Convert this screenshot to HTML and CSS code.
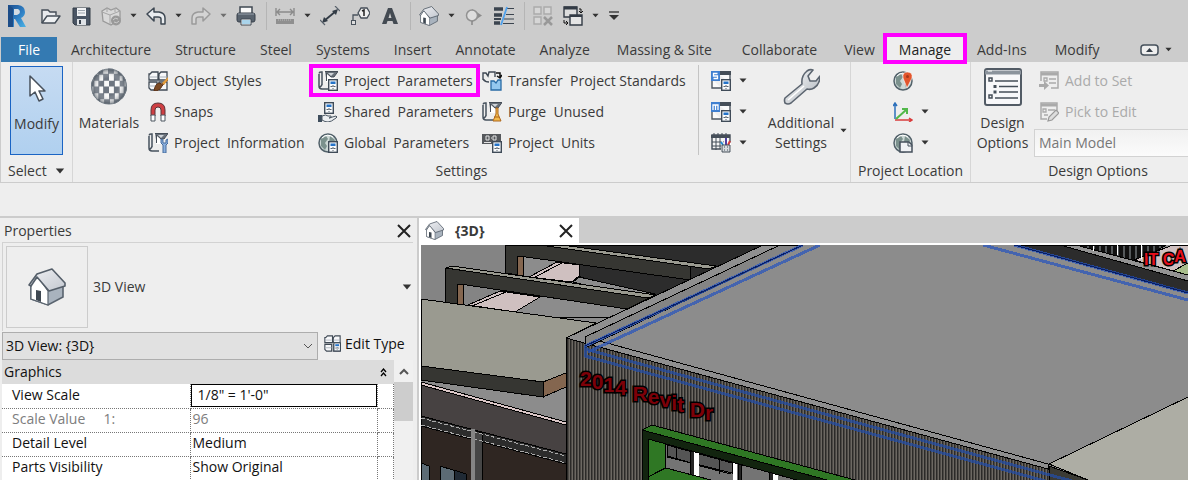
FILE: index.html
```html
<!DOCTYPE html>
<html lang="en">
<head>
<meta charset="utf-8">
<title>Revit - Manage</title>
<link rel="stylesheet" href="styles.css">
</head>
<body>
<svg class="defs" aria-hidden="true">
  <defs>
    <linearGradient id="metal" x1="0" y1="0" x2="1" y2="1"><stop offset="0" stop-color="#fff"/><stop offset="1" stop-color="#aab1b9"/></linearGradient>
    <linearGradient id="logo" x1="0" y1="0" x2="1" y2="1"><stop offset="0" stop-color="#1d4f8f"/><stop offset=".55" stop-color="#2f7fc4"/><stop offset="1" stop-color="#4bb4e6"/></linearGradient>
    <linearGradient id="roof" x1="0" y1="0" x2="1" y2="1"><stop offset="0" stop-color="#f0f1f4"/><stop offset="1" stop-color="#c3c8d0"/></linearGradient>
    <radialGradient id="ballShade"><stop offset=".5" stop-color="#fff" stop-opacity="0"/><stop offset="1" stop-color="#3c4650" stop-opacity=".6"/></radialGradient>
    <clipPath id="ballClip"><circle cx="19" cy="19" r="18.500"/></clipPath>
  </defs>
  <symbol id="caret" viewBox="0 0 8 5"><path d="M0.500 0.500h7L4 4.500z" fill="#333"/></symbol>
  <symbol id="house" viewBox="0 0 38 38">
    <path d="M3 15v16l17 6 15-8V16L21 22z" fill="#a9b3be" stroke="#59636e" stroke-width="1.600"/>
    <path d="M3 15l7-6 10 14v14L3 31z" fill="#fff" stroke="#59636e" stroke-width="1.200"/>
    <path d="M8 22l5 1v11l-5-2z" fill="#3f4852"/>
    <path d="M1 17L9 6l15-5 13 14v3L21 23 9 9 3 18z" fill="url(#roof)" stroke="#545e69" stroke-width="1.600" stroke-linejoin="round"/>
  </symbol>
  <symbol id="sheet" viewBox="0 0 20 20">
    <path d="M1.500 2.500Q1 1 3 1h1v13M1 3v12q0 3 3 3h7M4 13q0 2-2 3" fill="none" stroke="#46515d" stroke-width="1.500"/>
    <path d="M6 1h14l-4 6v4H8V6z" fill="#fff"/><path d="M7 .5h13l-4 5.500h-3L8.500 2v8" fill="#687079" stroke="#454d57"/><path d="M10 2h6l-3 3z" fill="#cfd4d9"/>
  </symbol>
  <symbol id="calc" viewBox="0 0 10 12">
    <rect x=".7" y=".7" width="8.600" height="10.600" fill="#f8fafc" stroke="#3f4b58" stroke-width="1.400"/>
    <rect x="2.500" y="2.500" width="5" height="2.500" fill="#2473c8"/><path d="M2.500 7.500h5M5 6v4" stroke="#59636d" stroke-dasharray="2 1"/>
  </symbol>
  <symbol id="globe" viewBox="0 0 20 20">
    <circle cx="10" cy="10" r="9" fill="#cdd8d6" stroke="#52616a" stroke-width="1.500"/>
    <path d="M3 6l5-3 2 3-3 4 2 3-2 4-4-4zM12 3l5 4-2 4-4-2zM12 13l4 0-3 4z" fill="#7b918d"/><path d="M4 5q5-5 11-1" stroke="#fff" fill="none"/>
  </symbol>
  <symbol id="blocks" viewBox="0 0 20 20">
    <path d="M2 3l2-2h6v8H1V3zM11 3l2-2h6v8h-8zM1 11h8v8H3l-2-2zM11 11h8v8h-8z" fill="#f7f8fa" stroke="#404a55" stroke-width="1.300"/><path d="M1 6h8M11 6h8M1 15h8" stroke="#a9b1ba"/>
  </symbol>
  <symbol id="listwin" viewBox="0 0 20 20">
    <path d="M5 1h14v11M1 8v9h9" fill="#fafafa" stroke="#4e5761" stroke-width="1.400"/><path d="M9 0h11v4H9z" fill="#454e58"/><path d="M0 0h9v10H0z" fill="#3f7fd0"/>
    <use href="#calc" x="10" y="8" width="10" height="12"/>
  </symbol>
</svg>

<header class="quick-access">
  <button class="logo" aria-label="Revit"><svg viewBox="0 0 20 24"><path d="M1 1h10q7 1 7 7 0 4-4 6l5 9h-6l-5-8H7v8H1z" fill="url(#logo)"/><path d="M7 5h4q2 1 2 3t-3 3H7z" fill="#d3dbe3"/><path d="M1 1l5 3v19H1z" fill="#1d4d88"/></svg></button>
  <button class="qa" aria-label="Open"><svg viewBox="0 0 20 20"><path d="M1 17V4h6l2 2h6v3" fill="#e8eaed" stroke="#454e58" stroke-width="1.400"/><path d="M1 17l5-7h13l-5 7z" fill="#eef0f2" stroke="#454e58" stroke-width="1.400" stroke-linejoin="round"/></svg></button>
  <button class="qa" aria-label="Save"><svg viewBox="0 0 20 20"><path d="M2 2h17v17H4l-2-2z" fill="#4a5564" stroke="#333c47"/><path d="M6 2h9v8H6z" fill="#f1f2f4"/><path d="M7 4.500h7M7 7h7" stroke="#9ca4ad"/><path d="M6 13h9v6H6z" fill="#dfe3e7"/><path d="M8 14h2v4H8z" fill="#37414d"/></svg></button>
  <button class="qa" aria-label="Synchronize"><svg viewBox="0 0 20 20"><path d="M1 5l5-3 4 2 5-2 4 3v8l-9 6-8-4z" fill="#d9d9d9" stroke="#9a9a9a" stroke-width="1.300"/><path d="M1 6l8 3v9M9 9l10-4M6 2v4M14 2v4" stroke="#a5a5a5" fill="none"/><circle cx="15" cy="14.500" r="5" fill="#999"/><path d="M12 14q2-3 5-1M18 15q-2 3-5 1" stroke="#ccc" fill="none"/></svg></button>
  <button class="drop" aria-label="Synchronize options"><svg><use href="#caret"/></svg></button>
  <button class="qa" aria-label="Undo"><svg viewBox="0 0 20 20"><path d="M1 8l7-6v4h5q6 1 6 6v6h-4v-5q0-2-3-2H8v4z" fill="#e9ecef" stroke="#3e4853" stroke-width="1.500" stroke-linejoin="round"/></svg></button>
  <button class="drop" aria-label="Undo list"><svg><use href="#caret"/></svg></button>
  <button class="qa" aria-label="Redo"><svg viewBox="0 0 20 20"><path d="M19 8l-7-6v4H7Q1 7 1 12v6h4v-5q0-2 3-2h4v4z" fill="#d4d4d4" stroke="#9b9b9b" stroke-width="1.500" stroke-linejoin="round"/></svg></button>
  <button class="drop faded" aria-label="Redo list"><svg><use href="#caret"/></svg></button>
  <button class="qa" aria-label="Print"><svg viewBox="0 0 20 20"><path d="M4 1h12v7H4z" fill="#fafafa" stroke="#3f4852" stroke-width="1.500"/><rect x="1" y="7" width="18" height="9" rx="2" fill="#59636e" stroke="#38414b"/><path d="M2 8h16" stroke="#99a3ad"/><path d="M5 13h10v6H5z" fill="#fff" stroke="#3f4852"/><path d="M6 15h8M6 17h8" stroke="#55a9d8"/></svg></button>
  <span class="rule"></span>
  <button class="qa" aria-label="Measure"><svg viewBox="0 0 20 20"><path d="M2 6h16M5 3L2 6l3 3M15 3l3 3-3 3M1 2v8M19 2v8" stroke="#8b8b8b" stroke-width="1.400" fill="none"/><path d="M1 13h18v5H1z" fill="#8f8f8f"/><path d="M3 14h14" stroke="#bbb" stroke-dasharray="1 1"/></svg></button>
  <button class="drop" aria-label="Measure options"><svg><use href="#caret"/></svg></button>
  <button class="qa" aria-label="Aligned Dimension"><svg viewBox="0 0 20 20"><path d="M4 15L16 5" stroke="#333c46" stroke-width="1.800"/><path d="M2 17l2-6 4 4zM18 3l-2 6-4-4z" fill="#333c46"/><path d="M0 14l5 5M15 0l5 5" stroke="#59626c" stroke-width="1.200"/></svg></button>
  <button class="qa" aria-label="Tag by Category"><svg viewBox="0 0 20 20"><path d="M3 15V9h5" fill="none" stroke="#4a535d" stroke-width="1.300"/><rect x="1.500" y="14.500" width="4" height="4" fill="#ddd" stroke="#4a535d"/><path d="M8 7l3-5h6l3 5-3 5h-6z" fill="#eee" stroke="#454e58" stroke-width="1.300"/><path d="M12 5l2-1v6" stroke="#222" stroke-width="1.500" fill="none"/></svg></button>
  <button class="qa" aria-label="Text"><svg viewBox="0 0 20 20"><path fill-rule="evenodd" d="M8 2h4l6 16h-4.500l-1-3h-5l-1 3H2zM10 7l-1.500 5h3z" fill="#434a52"/></svg></button>
  <span class="rule"></span>
  <button class="qa" aria-label="Default 3D View"><svg><use href="#house"/></svg></button>
  <button class="drop" aria-label="3D View options"><svg><use href="#caret"/></svg></button>
  <button class="qa" aria-label="Section"><svg viewBox="0 0 20 20"><path d="M8 3l10 6.500-10 6.500z" fill="#8c8c8c"/><circle cx="8" cy="9.500" r="5.500" fill="#ddd" stroke="#929292" stroke-width="1.500"/><path d="M8 15v4" stroke="#888" stroke-width="1.500"/></svg></button>
  <button class="qa" aria-label="Thin Lines"><svg viewBox="0 0 20 20"><path d="M0 3h9M0 9h8M0 17h6" stroke="#3b444f" stroke-width="3.500"/><path d="M0 13h7" stroke="#3b444f" stroke-width="2"/><path d="M13 2.500h7M12 8.500h8M10 13h10M9 17.500h11" stroke="#3b444f"/><path d="M13 1L7 19" stroke="#4ea1ee" stroke-width="1.800"/></svg></button>
  <span class="rule"></span>
  <button class="qa" aria-label="Close Inactive Views"><svg viewBox="0 0 20 20"><path d="M1 1h7v7H1zM11 1h7v7h-7zM1 11h7v7H1z" fill="#d6d6d6" stroke="#aaa" stroke-width="1.400"/><path d="M11 11l8 8M19 11l-8 8" stroke="#999" stroke-width="2.500"/></svg></button>
  <button class="qa" aria-label="Switch Windows"><svg viewBox="0 0 20 20"><path d="M1 1h13v10H1z" fill="#ddd" stroke="#333b45" stroke-width="1.400"/><path d="M1 2h13" stroke="#333b45" stroke-width="3"/><path d="M7 9h12v10H7z" fill="#e5e5e5" stroke="#333b45" stroke-width="1.400"/><path d="M7 10h12" stroke="#333b45" stroke-width="2"/><path d="M16 3h2v4M1 14v3h4M16 5l2 2 2-2M3 15l2 2-2 2" stroke="#111" fill="none"/></svg></button>
  <button class="drop" aria-label="Window list"><svg><use href="#caret"/></svg></button>
  <button class="drop customize" aria-label="Customize Quick Access Toolbar"><svg viewBox="0 0 10 9"><path d="M0 1h10" stroke="#444" stroke-width="1.500"/><path d="M0 4h10L5 9z" fill="#333"/></svg></button>
</header>

<nav class="tabs" aria-label="Ribbon tabs">
  <a class="tab file" href="#file">File</a>
  <a class="tab" href="#architecture">Architecture</a>
  <a class="tab" href="#structure">Structure</a>
  <a class="tab" href="#steel">Steel</a>
  <a class="tab" href="#systems">Systems</a>
  <a class="tab" href="#insert">Insert</a>
  <a class="tab" href="#annotate">Annotate</a>
  <a class="tab" href="#analyze">Analyze</a>
  <a class="tab wide" href="#massing">Massing &amp; Site</a>
  <a class="tab wide" href="#collaborate">Collaborate</a>
  <a class="tab" href="#view">View</a>
  <a class="tab active" href="#manage" aria-current="page">Manage</a>
  <a class="tab mid" href="#addins">Add-Ins</a>
  <a class="tab mid" href="#modify">Modify</a>
  <button class="collapse" aria-label="Minimize ribbon"><svg viewBox="0 0 19 12"><rect x="1" y="1" width="17" height="10" rx="3" fill="#eee" stroke="#45505b" stroke-width="1.500"/><path d="M6 8h7L9.500 4z" fill="#333c46"/></svg></button>
  <button class="drop" aria-label="Ribbon options"><svg><use href="#caret"/></svg></button>
</nav>

<main class="ribbon">
  <section class="panel select">
    <div class="tools">
      <button class="big modify"><svg viewBox="0 0 18 28"><path d="M2 1v20l5-4 4 9 4-2-4-8h6z" fill="#fff" stroke="#48515c" stroke-width="1.500" stroke-linejoin="round"/></svg><span>Modify</span></button>
    </div>
    <button class="caption">Select <svg><use href="#caret"/></svg></button>
  </section>

  <section class="panel settings">
    <div class="tools">
      <button class="big materials"><svg viewBox="0 0 38 39"><g clip-path="url(#ballClip)"><path d="M0 0h38v38H0z" fill="#f8f8f8"/><path d="M8 1h5v6H8zM18 0h6v6h-6zM28 2h5v6h-5zM3 7h6v6H3zM13 6h6v7h-6zM24 6h6v7h-6zM33 7h5v6h-5zM0 13h4v6H0zM8 13h6v6H8zM19 13h6v6h-6zM30 13h5v6h-5zM3 19h6v7H3zM13 19h6v7h-6zM24 19h6v7h-6zM34 19h4v7h-4zM0 26h4v6H0zM8 26h6v6H8zM19 26h6v6h-6zM29 26h6v6h-6zM4 32h6v5H4zM14 32h6v5h-6zM24 32h6v5h-6z" fill="#6d7580"/></g><circle cx="19" cy="19" r="18" fill="url(#ballShade)" stroke="#707983"/></svg><span>Materials</span></button>
      <div class="list first">
        <button class="tool"><svg viewBox="0 0 20 20"><use href="#blocks"/><path d="M20 7l-6 6-3-1q-4 1-5 8 6 0 8-5l6-6z" fill="#7c4a24" stroke="#5a3218"/><path d="M20 6l-6 6 2 2 4-5z" fill="#e29c3e"/></svg><span>Object  Styles</span></button>
        <button class="tool"><svg viewBox="0 0 20 20"><path d="M3 14V8q0-7 7-7t7 7v6h-4V8q0-3-3-3T7 8v6z" fill="#cf3f43" stroke="#5b3439"/><path d="M3 13h4v6H3zM13 13h4v6h-4z" fill="#fff" stroke="#4d5660"/></svg><span>Snaps</span></button>
        <button class="tool"><svg viewBox="0 0 20 20"><use href="#sheet"/><path d="M13 6v4l2 2v8h3v-8l2-2V6l-2 1v3h-3V7z" fill="#8bb0de" stroke="#456b9c"/></svg><span>Project  Information</span></button>
      </div>
      <div class="list second">
        <button class="tool marked"><svg viewBox="0 0 20 20"><use href="#sheet"/><use href="#calc" x="10" y="8" width="10" height="12"/></svg><span>Project  Parameters</span></button>
        <button class="tool"><svg viewBox="0 0 20 20"><use href="#calc" x="6" y="0" width="10" height="12"/><path d="M0 13h4v7H0z" fill="#3e4d5c"/><path d="M4 14q4-2 6 0h3q1 2-2 2l7-2q2 1 0 2-5 4-8 4t-6-2z" fill="#eceff2" stroke="#4b5763"/></svg><span>Shared  Parameters</span></button>
        <button class="tool"><svg viewBox="0 0 20 20"><use href="#globe"/><use href="#calc" x="10" y="8" width="10" height="12"/></svg><span>Global  Parameters</span></button>
      </div>
      <div class="list third">
        <button class="tool"><svg viewBox="0 0 20 20"><path d="M1 9V2h3l2 3 1-4h6v5M1 8q2 3 6 3" fill="#eee" stroke="#404a55" stroke-width="1.400"/><path d="M14 2h4v4M15 5l3 2 2-3" fill="none" stroke="#111" stroke-width="1.500"/><path d="M9 10h3l2 2 2-3h3v10H9z" fill="#94c8ef" stroke="#286ba5" stroke-width="1.300"/></svg><span>Transfer  Project Standards</span></button>
        <button class="tool"><svg viewBox="0 0 20 20"><use href="#sheet"/><path d="M14 6h2v6l3 7h-8l3-7z" fill="#f2b94c" stroke="#ad671c"/><path d="M12 15h5" stroke="#ad671c"/></svg><span>Purge  Unused</span></button>
        <button class="tool"><svg viewBox="0 0 20 20"><path d="M0 1h19v10H0z" fill="#55585c"/><path d="M4 3h3v4H4zM11 3h3v4h-3z" fill="none" stroke="#e4e4e4"/><path d="M2 9.500h7M9 5h1" stroke="#e4e4e4"/><use href="#calc" x="10" y="8" width="10" height="12"/></svg><span>Project  Units</span></button>
      </div>
      <span class="divider"></span>
      <div class="list icons">
        <button class="tool" aria-label="Structural Settings"><svg viewBox="0 0 20 20"><use href="#listwin"/><path d="M6.500 2.500h-4v2.500h4v2.500h-4" stroke="#fff" stroke-width="1.300" fill="none"/></svg><svg class="arrow"><use href="#caret"/></svg></button>
        <button class="tool" aria-label="MEP Settings"><svg viewBox="0 0 20 20"><use href="#listwin"/><path d="M2 8V3h5v5M4.500 3v5" stroke="#fff" stroke-width="1.300" fill="none"/></svg><svg class="arrow"><use href="#caret"/></svg></button>
        <button class="tool" aria-label="Panel Schedule Templates"><svg viewBox="0 0 20 20"><path d="M1 2h18v14H1z" fill="#f4f4f4" stroke="#454e58" stroke-width="1.400"/><path d="M0 2h19v3H0z" fill="#454e58"/><path d="M3 0v2M7 0v2M11 0v2M15 0v2M1 9h12M1 13h10M5 4v13M9 4v12" stroke="#454e58"/><path d="M10 11l1-4 3 5 1-7h2v7l3-3v10H10z" fill="#fff"/><path d="M12 12l-2-3" stroke="#258ad4" stroke-width="2"/><path d="M15 12V5" stroke="#5140a3" stroke-width="2"/><path d="M17 12l2-4" stroke="#db3838" stroke-width="2"/><path d="M11 12h8v7h-8z" fill="#d7dbdf" stroke="#454e58"/><path d="M13 14h1M16 14h1M13 17h1M16 17h1" stroke="#454e58"/></svg><svg class="arrow"><use href="#caret"/></svg></button>
      </div>
      <button class="big additional"><svg viewBox="0 0 38 38"><path d="M3 30L20 16q-1-8 5-13 3-2 6-1l-5 6 2 5 6 0 4-5q0 8-6 12-3 2-7 1L9 35q-3 2-6 0-1-3 0-5z" fill="url(#metal)" stroke="#5c6570" stroke-width="1.600" stroke-linejoin="round"/><path d="M6 32l16-14" stroke="#fff" stroke-width="1.500"/></svg><span>Additional<br>Settings</span></button>
      <button class="drop more" aria-label="Additional Settings menu"><svg><use href="#caret"/></svg></button>
    </div>
    <div class="caption">Settings</div>
  </section>

  <section class="panel location">
    <div class="tools">
      <div class="list icons">
        <button class="tool" aria-label="Location"><svg viewBox="0 0 20 20"><use href="#globe"/><path d="M14 17L10 7q-1-6 4.500-6T19 7z" fill="#e2552c" stroke="#fff" stroke-width=".6"/><circle cx="14.500" cy="5.500" r="1.500" fill="#a6371c"/></svg></button>
        <button class="tool" aria-label="Coordinates"><svg viewBox="0 0 20 20"><path d="M2 17V2M0 4l2-3 2 3" stroke="#2c70bb" stroke-width="1.500" fill="none"/><path d="M2 18h16M16 16l3 2-3 2" stroke="#d93c3c" stroke-width="1.500" fill="none"/><path d="M3 17L13 8M9 7h5v5" stroke="#52b84a" stroke-width="2" fill="none"/></svg><svg class="arrow"><use href="#caret"/></svg></button>
        <button class="tool" aria-label="Position"><svg viewBox="0 0 20 20"><use href="#globe"/><path d="M7 9h9l3 3v7H7z" fill="#f0f2f5" stroke="#45505c" stroke-width="1.500"/><path d="M15 9v4h4" fill="none" stroke="#45505c"/></svg><svg class="arrow"><use href="#caret"/></svg></button>
      </div>
    </div>
    <div class="caption">Project Location</div>
  </section>

  <section class="panel design">
    <div class="tools">
      <button class="big options"><svg viewBox="0 0 38 38"><rect x="1" y="1" width="36" height="36" rx="2" fill="#f8f8fa" stroke="#525b65" stroke-width="2"/><path d="M1 4.500h36" stroke="#8c949d" stroke-width="4"/><path d="M4 3h4" stroke="#fff"/><g fill="none" stroke="#454e58" stroke-width="1.500"><path d="M5 10h3v3H5zM5 27h3v3H5zM11 13h23M15 18.500h19M15 24h19M11 30h23"/></g><path d="M9.500 17h3v3h-3zM9.500 22.500h3v3h-3z" fill="#454e58"/></svg><span>Design<br>Options</span></button>
      <div class="list set">
        <button class="tool" disabled><svg viewBox="0 0 20 20"><path d="M2 10V1h17v16h-7" fill="#eee" stroke="#aaa" stroke-width="1.500"/><path d="M2 3h17" stroke="#aaa" stroke-width="3"/><path d="M5 7h3v3H5zM10 8h7M10 12h7" fill="none" stroke="#aaa" stroke-width="1.300"/><path d="M0 13h5v-3l5 4.500-5 4.500v-3H0z" fill="#aaa"/></svg><span>Add to Set</span></button>
        <button class="tool" disabled><svg viewBox="0 0 20 20"><path d="M8 17H2V1h16v8" fill="#eee" stroke="#aaa" stroke-width="1.500"/><path d="M2 3h16" stroke="#aaa" stroke-width="3"/><path d="M4 7h3v3H4zM9 8h7M5 13h4" fill="none" stroke="#aaa" stroke-width="1.300"/><path d="M9 19l1-4 7-7 3 3-7 7z" fill="#ddd" stroke="#999" stroke-width="1.200"/></svg><span>Pick to Edit</span></button>
        <select aria-label="Active design option" disabled><option>Main Model</option></select>
      </div>
    </div>
    <div class="caption">Design Options</div>
  </section>
</main>
<div class="options-bar"></div>

<div class="workspace">
  <aside class="properties">
    <div class="title"><span>Properties</span><button class="close" aria-label="Close properties"><svg viewBox="0 0 14 14"><path d="M1 1l12 12M13 1L1 13" stroke="#222" stroke-width="2"/></svg></button></div>
    <div class="type">
      <div class="thumb"><svg><use href="#house"/></svg></div>
      <span>3D View</span>
      <button class="drop" aria-label="Change type"><svg><use href="#caret"/></svg></button>
    </div>
    <div class="instance">
      <div class="picker"><select aria-label="View"><option>3D View: {3D}</option></select><svg viewBox="0 0 10 6"><path d="M1 1l4 4 4-4" fill="none" stroke="#555"/></svg></div>
      <button class="edit"><svg viewBox="0 0 20 20"><use href="#blocks"/><use href="#calc" x="11" y="8" width="9" height="12"/></svg><span>Edit Type</span></button>
    </div>
    <div class="grid">
      <table>
        <colgroup><col class="name"><col><col class="end"></colgroup>
        <thead><tr><th colspan="2" scope="colgroup">Graphics</th><th><button class="fold" aria-label="Collapse Graphics"><svg viewBox="0 0 7 9"><path d="M1 4l2.500-3L6 4M1 8l2.500-3L6 8" fill="none" stroke="#000" stroke-width="1.300"/></svg></button></th></tr></thead>
        <tbody>
          <tr><th scope="row"><label for="scale">View Scale</label></th><td class="field"><input id="scale" value="1/8&quot; = 1'-0&quot;"></td><td></td></tr>
          <tr class="off"><th scope="row">Scale Value     1:</th><td>96</td><td></td></tr>
          <tr><th scope="row">Detail Level</th><td>Medium</td><td></td></tr>
          <tr><th scope="row">Parts Visibility</th><td>Show Original</td><td></td></tr>
        </tbody>
      </table>
      <div class="scroll"><svg viewBox="0 0 10 7"><path d="M1 6l4-4 4 4" fill="none" stroke="#555" stroke-width="2"/></svg><div class="handle"></div></div>
    </div>
  </aside>

  <section class="view">
    <div class="doc-tabs">
      <div class="doc"><svg><use href="#house"/></svg><strong>{3D}</strong><button class="close" aria-label="Close view"><svg viewBox="0 0 14 14"><path d="M1 1l12 12M13 1L1 13" stroke="#222" stroke-width="2"/></svg></button></div>
    </div>
    <svg class="scene" viewBox="421 245 767 235" preserveAspectRatio="xMinYMin slice" role="img" aria-label="3D model">
      <defs>
        <pattern id="siding" width="3" height="8" patternUnits="userSpaceOnUse"><path d="M0 0h3v8H0z" fill="#6c6862"/><path d="M0 0h1v8H0z" fill="#2b2a28"/><path d="M1 0h1v8H1z" fill="#4c4945"/></pattern>
        <pattern id="slats" width="6" height="8" patternUnits="userSpaceOnUse"><path d="M0 0h6v8H0z" fill="#111"/><path d="M1 0h2v8H1z" fill="#55595b"/></pattern>
      </defs>
      <path d="M421 245h767v235H421z" fill="#8c8c8c"/>
      <path d="M421 245h100v60H421z" fill="#848484"/>
      <g stroke="#000" stroke-width="1">
        <path d="M560 245h203l-123 58-61-27v-17z" fill="#2c2c2c"/>
        <path d="M579 277l76 17-12 6-70-18z" fill="#8c8c8c"/>
        <path d="M529 277l28-15 22 3v11l-7 6z" fill="#cfc0c0"/><path d="M533 278l29-15" />
        <path d="M505 245h38l147 20v15l-171-24v19l-14-2z" fill="#363632"/>
        <path d="M540 245h22l154 21-7 3z" fill="#9a9a90"/>
        <path d="M517 256l6 1v19l-6-1z" fill="#84664f"/>
        <path d="M468 305l32-14 40 6-25 15z" fill="#cfc0c0"/><path d="M472 306l34-14"/>
        <path d="M445 303v-35l208 28-26 13-167-25-3 1v19z" fill="#363632"/>
        <path d="M446 268l6-2 204 29-8 3z" fill="#9a9a90"/>
        <path d="M457 284l6 1v20l-6-1z" fill="#84664f"/>
        <path d="M555 318l60-1"/>
        <path d="M421 299l175 24-30 15v35l-23 9-122-16z" fill="#9a9a90"/>
        <path d="M421 366l122 16v15l-122-17z" fill="#363632"/>
        <path d="M543 382l23-9v14l-23 10z" fill="#84664f"/>
        <path d="M421 385l145 38v57H421z" fill="#474242"/>
        <path d="M421 382l145 40v3l-145-40z" fill="#dcc8c8"/>
        <path d="M421 426l145 38v16H421z" fill="#2f2622"/>
        <path d="M421 416l145 38v10l-145-38z" fill="#2c2c2c"/>
        <path d="M421 463l8 3v14h-8zM440 466l26 8v6h-26z" fill="#5c6b75"/><path d="M454 470l12 4v6h-12z" fill="#202a35"/>
        <path d="M471 429l11 4v47h-11z" fill="#464646"/>
        <path d="M566 338l483 131v11H566z" fill="url(#siding)"/>
        <path d="M566 338l197-93h17l-195 92 463 127v5z" fill="#8f8f8f"/>
        <path d="M585 337l195-92h23l-218 103z" fill="#848484"/>
        <path d="M1014 245h46l128 36v11z" fill="#2c2c2c"/>
        <path d="M1060 245h16l112 30v6z" fill="#949494"/>
        <path d="M1076 245h90l-27 17z" fill="url(#slats)"/>
        <path d="M1134 260l39-15h15v30z" fill="#cfc0c0"/>
        <path d="M1173 271l15-8v12z" fill="#a8bd8c"/>
        <path d="M1049 464l139-67v83h-100z" fill="#adada4"/>
        <path d="M1049 466l39 14h-39z" fill="#3b3b35"/>
      </g>
      <path d="M1093 246v5M1117 245v10M1141 245v14" stroke="#fff" stroke-width="1"/>
      <path d="M421 418l145 38M421 425l145 38" stroke="#aaa" stroke-dasharray="4 2" stroke-width="1"/>
      <path d="M471 429h4v51h-4z" fill="#858585"/>
      <g fill="none" stroke="#2855bd" stroke-opacity=".72" stroke-width="3">
        <path d="M585 346l218-101M588 352l232-107M983 245l205 55M1014 245l174 48"/>
      </g>
      <g fill="none" stroke="#234da8" stroke-opacity=".72" stroke-width="3">
        <path d="M585 345v11l464 126M585 349l487 132"/>
      </g>
      <path d="M585 346l218-101M1014 245l174 48" fill="none" stroke="#061d65"/>
      <g stroke="#000">
        <path d="M665 443l133 37H665z" fill="#747474"/>
        <path d="M667 445l65 18v10l-65-16z" fill="#555"/>
        <path d="M676 446v13M719 457v17M667 456l25 7M700 466l31 8" fill="none"/>
        <path d="M690 451h4v29h-4zM738 464h3v16h-3zM769 472h4v8h-4z" fill="#252525"/>
        <path d="M694 449h5v31h-5zM733 459h4v21h-4zM773 470h5v10h-5z" fill="#fff" stroke="none"/>
        <path d="M648 438l17 5v25l-17 9z" fill="#2f7724"/>
        <path d="M648 477l18-9 45 12h-63z" fill="#2f7724"/>
        <path d="M642 430l185 50h-30l-149-41v41h-6z" fill="#12240f"/>
        <path d="M642 430l10-5 203 55h-28z" fill="#2f7724"/>
      </g>
      <text class="sign" x="580" y="386" dy="0 3 3 3 3 3 3 3 3 2 2 3 3">2014 Revit Dr</text>
      <text class="sign bright" x="1144" y="265" dy="0 0 0 0 -3">IT CA</text>
    </svg>
  </section>
</div>
</body>
</html>
```
FILE: styles.css
```css
* { box-sizing: border-box; }

body {
  margin: 0;
  height: 100vh;
  display: flex;
  flex-direction: column;
  overflow: hidden;
  background: #eee;
  color: #3a3a3a;
  font: 14px/20px "Open Sans", "Noto Sans", sans-serif;
}

button, select, input { font: inherit; color: inherit; }
button { border: 0; padding: 0; margin: 0; background: none; }
svg { display: block; flex: none; }
.defs { position: absolute; width: 0; height: 0; }

/* Quick access toolbar */
.quick-access {
  display: flex;
  align-items: center;
  gap: 7px;
  height: 37px;
  flex: none;
  padding: 0 6px 6px;
  background: #ccc;
}
.logo { width: 22px; }
.logo svg { width: 22px; height: 24px; }
.logo + .qa { margin-left: 6px; }
.qa svg { width: 20px; height: 20px; }
.qa + .qa { margin-left: 3px; }
.drop { display: grid; place-items: center; width: 11px; height: 20px; flex: none; }
.drop svg { width: 7px; height: 5px; }
.drop.customize svg { width: 10px; height: 9px; }
.faded { opacity: .6; }
.rule { width: 1px; height: 28px; margin: 0 1px 0 3px; background: #b5b5b5; }

/* Ribbon tabs */
.tabs {
  display: flex;
  align-items: stretch;
  flex: none;
  height: 25px;
  padding-left: 1px;
  background: #ccc;
}
.tab { padding: 3px 12px 2px; color: inherit; text-decoration: none; white-space: nowrap; }
.tab.wide { padding-inline: 15px; }
.tab.mid { padding-inline: 14px; }
.tab.file { width: 56px; margin-right: 2px; text-align: center; background: #347ab2; color: #fff; }
.tab.active { position: relative; background: #eee; color: #222; }
.tab.active::after { content: ""; position: absolute; inset: -4px -4px -2px; border: 4px solid #f0f; }
.collapse { margin: 0 4px 0 26px; }
.collapse svg { width: 19px; height: 12px; }
.tabs .drop { height: auto; }

/* Ribbon panels */
.ribbon {
  display: flex;
  flex: none;
  overflow: hidden;
  border: solid #ccc;
  border-width: 0 0 1px 1px;
}
.panel { display: flex; flex-direction: column; flex: none; border-right: 1px solid #d6d6d6; }
.tools { display: flex; height: 96px; padding-top: 3px; }
.caption { height: 24px; padding-top: 3px; text-align: center; }
button.caption { display: flex; align-items: center; gap: 8px; padding: 2px 7px 0; }
button.caption svg { width: 10px; height: 6px; }
.big {
  display: flex;
  flex-direction: column;
  align-items: center;
  gap: 7px;
  padding-top: 3px;
  line-height: 20px;
}
.big svg { width: 38px; height: 38px; }
.list { display: flex; flex-direction: column; gap: 6px; padding-top: 3px; }
.tool {
  display: flex;
  align-items: center;
  gap: 6px;
  height: 25px;
  padding: 0 5px;
  text-align: left;
  white-space: pre;
}
.tool svg { width: 20px; height: 20px; }
.tool svg.arrow { width: 8px; height: 5px; margin-left: 2px; }
.tool:disabled { color: #aaa; }
.marked { outline: 4px solid #f0f; }

.select { width: 72px; }
.select .tools { padding: 4px 9px 3px 9px; }
.modify { flex: 1; padding-top: 8px; gap: 11px; border: 1px solid #1a64c4; background: linear-gradient(#c6dbf2, #b0d0ef); }
.modify svg { width: 18px; height: 28px; }

.settings .tools { padding-left: 5px; }
.materials { width: 62px; margin-right: 3px; }
.first { width: 170px; }
.second { width: 163px; margin-right: 1px; }
.third { width: 221px; }
.divider { width: 1px; margin-bottom: 3px; background: #c4c4c4; }
.settings .icons { padding-left: 7px; }
.additional { width: 74px; margin-left: 12px; }
.more { align-self: end; height: 56px; margin-right: 1px; }

.location { width: 120px; }
.location .icons { padding-left: 37px; }

.design { flex: 1 0 254px; border: 0; }
.options { width: 63px; }
.set { flex: 1; }
.set select {
  appearance: none;
  width: 100%;
  height: 28px;
  margin-top: -1px;
  padding: 0 4px;
  border: 1px solid #d2d2d2;
  background: linear-gradient(#f1f1f1, #fbfbfb);
  color: #777;
  opacity: 1;
}

.options-bar { flex: none; height: 35px; border-bottom: 2px solid #ccc; }

/* Workspace */
.workspace { flex: 1; min-height: 0; display: flex; }
.properties { width: 419px; flex: none; border-right: 2px solid #ccc; padding-left: 2px; overflow: hidden; }
.title { display: flex; justify-content: space-between; align-items: center; height: 24px; padding: 1px 6px 0 2px; }
.close svg { width: 14px; height: 14px; }
.type {
  display: flex;
  align-items: center;
  gap: 5px;
  height: 89px;
  margin-right: 4px;
  padding: 0 1px 0 3px;
  border: solid #d2d2d2;
  border-width: 1px 0 0 1px;
}
.thumb { display: grid; place-items: center; width: 82px; height: 82px; border: 1px solid #ccc; }
.thumb svg { width: 38px; height: 38px; }
.type .drop { margin-left: auto; }
.type .drop svg { width: 10px; height: 6px; }
.instance { display: flex; align-items: center; gap: 6px; height: 29px; color: #111; }
.picker { display: grid; width: 316px; }
.picker > * { grid-area: 1 / 1; }
.picker select { appearance: none; height: 28px; padding: 0 3px; border: 1px solid #adadad; border-radius: 0; background: #e1e1e1; }
.picker svg { width: 10px; height: 6px; place-self: center end; margin-right: 5px; }
.edit { display: flex; align-items: center; gap: 4px; padding-bottom: 4px; }
.edit svg { width: 17px; height: 17px; }

.grid { display: flex; margin-right: 4px; color: #111; }
table { flex: 1; table-layout: fixed; border-collapse: collapse; background: #fff; }
.name { width: 188px; }
.end { width: 16px; }
th, td { height: 24px; padding: 0 0 0 2px; font-weight: 400; text-align: left; white-space: pre; }
thead th { background: #dcdcdc; }
tbody th { padding-left: 10px; }
tbody th, tbody td { padding-bottom: 2px; border: dotted #777; border-width: 0 1px 1px 0; }
.off { color: #7d7d7d; }
tbody .field { padding: 0; }
.field input { display: block; width: 100%; height: 23px; padding: 0 6px 2px; border: 1px solid #000; background: #fff; }
.fold { display: block; }
.fold svg { width: 7px; height: 9px; }
.scroll { width: 19px; padding-top: 8px; background: #f0f0f0; }
.scroll svg { width: 10px; height: 7px; margin: 0 auto 7px; }
.handle { height: 39px; background: #cdcdcd; }

.view { flex: 1; min-width: 0; display: flex; flex-direction: column; }
.doc-tabs { flex: none; display: flex; height: 27px; background: #ccc; border-bottom: 2px solid #fff; }
.doc { display: flex; align-items: center; gap: 11px; width: 160px; padding: 0 6px; background: #fff; }
.doc > svg { width: 19px; height: 19px; }
.doc .close { margin-left: auto; }
.scene { flex: 1; min-height: 0; width: 100%; padding-left: 2px; background: #fff; shape-rendering: crispEdges; }
.sign { font: bold 21px "Liberation Sans", sans-serif; fill: #7d0008; stroke: #000; stroke-width: 3px; paint-order: stroke; }
.sign.bright { font-size: 16px; fill: #e8101c; }
```
